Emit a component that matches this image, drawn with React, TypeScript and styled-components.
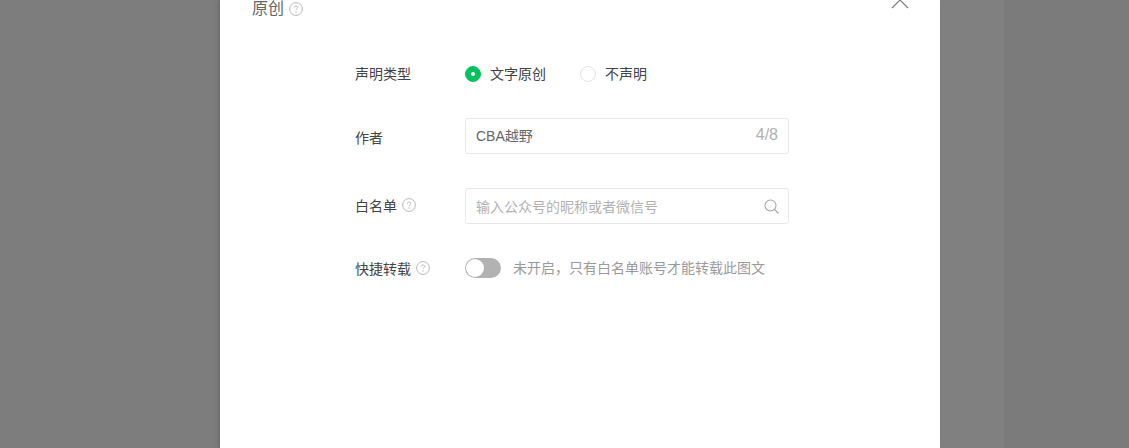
import React from "react";
import styled, { createGlobalStyle } from "styled-components";

const GlobalStyle = createGlobalStyle`
  html, body {
    margin: 0;
    padding: 0;
    height: 100%;
    overflow: hidden;
    background: #808080;
    font-family: "Liberation Sans", "Noto Sans CJK SC", sans-serif;
  }
`;

const HelpIcon = ({ size = 14 }: { size?: number }) => (
  <HelpSvg width={size} height={size} viewBox="0 0 14 14" fill="none">
    <circle cx="7" cy="7" r="6.4" stroke="#b8b8b8" strokeWidth="1" />
    <path
      d="M5.3 5.6c0-1 .8-1.6 1.7-1.6s1.7.6 1.7 1.5c0 1.2-1.7 1.3-1.7 2.6"
      stroke="#b8b8b8"
      strokeWidth="1"
    />
    <circle cx="7" cy="10" r=".7" fill="#b8b8b8" />
  </HelpSvg>
);

export default function App() {
  return (
    <>
      <GlobalStyle />
      <Page>
        <LeftShade />
        <Dialog>
          <Header>
            <Title>原创</Title>
            <HelpIcon />
            <CloseIcon width="20" height="20" viewBox="0 0 20 20" fill="none">
              <path d="M2 2l16 16M18 2L2 18" stroke="#7f7f7f" strokeWidth="1.2" />
            </CloseIcon>
          </Header>
          <Form>
            <Row>
              <Label>声明类型</Label>
              <RadioGroup>
                <RadioItem>
                  <Radio $checked />
                  文字原创
                </RadioItem>
                <RadioItem>
                  <Radio />
                  不声明
                </RadioItem>
              </RadioGroup>
            </Row>
            <Row>
              <Label $shift={4}>作者</Label>
              <InputBox>
                <InputText>CBA越野</InputText>
                <Counter>4/8</Counter>
              </InputBox>
            </Row>
            <Row>
              <Label>
                白名单
                <HelpIcon />
              </Label>
              <InputBox>
                <Placeholder>输入公众号的昵称或者微信号</Placeholder>
                <SearchIcon width="15" height="15" viewBox="0 0 15 15" fill="none">
                  <circle cx="6.5" cy="6.5" r="5.5" stroke="#a6a6a6" strokeWidth="1.1" />
                  <path d="M10.5 10.5l4 4" stroke="#a6a6a6" strokeWidth="1.1" />
                </SearchIcon>
              </InputBox>
            </Row>
            <Row>
              <Label $shift={2}>
                快捷转载
                <HelpIcon />
              </Label>
              <Switch>
                <Knob />
              </Switch>
              <SwitchHint>未开启，只有白名单账号才能转载此图文</SwitchHint>
            </Row>
          </Form>
        </Dialog>
        <RightGutter />
      </Page>
    </>
  );
}

const Page = styled.div`
  display: flex;
  width: 1129px;
  height: 448px;
  overflow: hidden;
  background: #808080;
`;

const LeftShade = styled.div`
  width: 220px;
  flex: none;
  background: #7d7d7d;
`;

const RightGutter = styled.div`
  flex: 1;
  margin-left: 64px;
  background: #7b7b7b;
`;

const Dialog = styled.div`
  width: 720px;
  flex: none;
  background: #fff;
  box-sizing: border-box;
  box-shadow: -2px 0 4px rgba(0, 0, 0, 0.14);
`;

const Header = styled.div`
  position: relative;
  display: flex;
  align-items: center;
  gap: 5px;
  height: 18px;
  padding-left: 32px;
`;

const Title = styled.span`
  font-size: 16px;
  line-height: 16px;
  color: #666;
`;

const HelpSvg = styled.svg`
  flex: none;
`;

const CloseIcon = styled.svg`
  position: absolute;
  right: 30px;
  top: -10px;
`;

const Form = styled.div`
  display: flex;
  flex-direction: column;
  gap: 34px;
  padding: 46px 0 0 135px;
`;

const Row = styled.div`
  display: flex;
  align-items: center;
  min-height: 20px;
`;

const Label = styled.div<{ $shift?: number }>`
  display: flex;
  align-items: center;
  gap: 5px;
  width: 110px;
  flex: none;
  font-size: 14px;
  color: #444;
  padding-top: ${(p) => p.$shift ?? 0}px;
  box-sizing: border-box;
  margin-top: -2px;
`;

const RadioGroup = styled.div`
  display: flex;
  gap: 34px;
`;

const RadioItem = styled.label`
  display: flex;
  align-items: center;
  gap: 9px;
  font-size: 14px;
  line-height: 16px;
  color: #444;
`;

const Radio = styled.span<{ $checked?: boolean }>`
  position: relative;
  width: 16px;
  height: 16px;
  border-radius: 50%;
  box-sizing: border-box;
  border: 1px solid ${(p) => (p.$checked ? "#07c160" : "#e4e4e4")};
  background: ${(p) => (p.$checked ? "#07c160" : "#fff")};

  &::after {
    content: "";
    display: ${(p) => (p.$checked ? "block" : "none")};
    position: absolute;
    left: 5px;
    top: 5px;
    width: 4px;
    height: 4px;
    border-radius: 50%;
    background: #fff;
  }
`;

const InputBox = styled.div`
  display: flex;
  align-items: center;
  justify-content: space-between;
  box-sizing: border-box;
  width: 324px;
  height: 36px;
  padding: 0 9px 0 10px;
  border: 1px solid #e4e8eb;
  border-radius: 3px;
  font-size: 14px;
`;

const InputText = styled.span`
  color: #666;
  margin-top: -2px;
`;

const Counter = styled.span`
  color: #b2b2b2;
  font-size: 16px;
  margin-right: 1px;
  margin-top: -2px;
`;

const Placeholder = styled.span`
  color: #b2b2b2;
  margin-top: -1px;
`;

const SearchIcon = styled.svg`
  flex: none;
`;

const Switch = styled.span`
  display: flex;
  align-items: center;
  box-sizing: border-box;
  width: 36px;
  height: 20px;
  padding: 0 1px;
  border-radius: 10px;
  background: #b2b2b2;
`;

const Knob = styled.span`
  width: 18px;
  height: 18px;
  border-radius: 50%;
  background: #fff;
`;

const SwitchHint = styled.span`
  margin-left: 12px;
  margin-top: -2px;
  font-size: 14px;
  color: #9a9a9a;
`;
